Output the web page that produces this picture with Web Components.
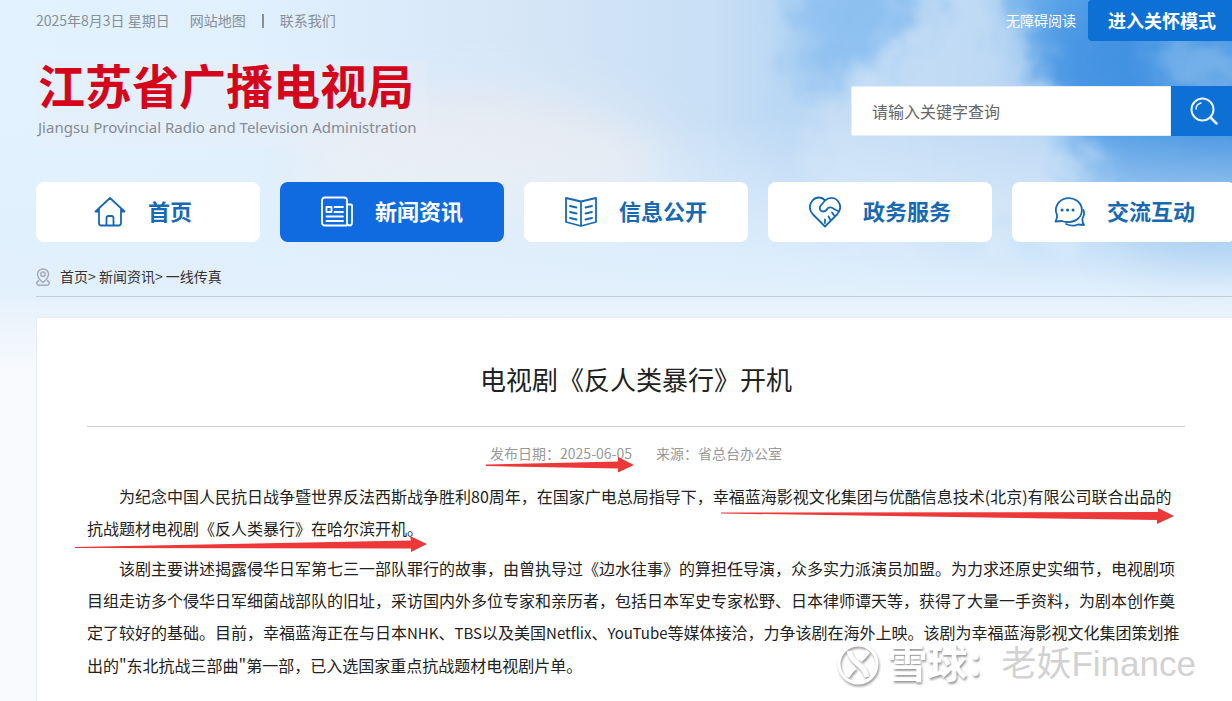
<!DOCTYPE html>
<html lang="zh-CN">
<head>
<meta charset="utf-8">
<meta name="viewport" content="width=device-width, initial-scale=1">
<title>电视剧《反人类暴行》开机</title>
<style>
  html, body { margin: 0; }
  body {
    min-height: 100vh;
    overflow-x: hidden;
    background: #f8fafd;
    color: #222;
    font-family: "Noto Sans CJK SC", "Noto Sans", sans-serif;
    font-size: 14px;
    line-height: 20px;
  }
</style>
</head>
<body>
<gov-page>
  <top-bar slot="top"></top-bar>
  <site-header slot="header"></site-header>
  <main-nav slot="nav">
    <nav-item icon="home">首页</nav-item>
    <nav-item icon="news" active>新闻资讯</nav-item>
    <nav-item icon="book">信息公开</nav-item>
    <nav-item icon="heart">政务服务</nav-item>
    <nav-item icon="chat">交流互动</nav-item>
  </main-nav>
  <bread-crumb slot="crumb"></bread-crumb>
  <news-article>
    <span slot="title">电视剧《反人类暴行》开机</span>
    <span slot="date">发布日期：2025-06-05</span>
    <span slot="source">来源：省总台办公室</span>
    <article-text>为纪念中国人民抗日战争暨世界反法西斯战争胜利80周年，在国家广电总局指导下，幸福蓝海影视文化集团与优酷信息技术(北京)有限公司联合出品的抗战题材电视剧《反人类暴行》在哈尔滨开机。</article-text>
    <article-text>该剧主要讲述揭露侵华日军第七三一部队罪行的故事，由曾执导过《边水往事》的算担任导演，众多实力派演员加盟。为力求还原史实细节，电视剧项目组走访多个侵华日军细菌战部队的旧址，采访国内外多位专家和亲历者，包括日本军史专家松野、日本律师谭天等，获得了大量一手资料，为剧本创作奠定了较好的基础。目前，幸福蓝海正在与日本<span>NHK</span>、<span>TBS</span>以及美国<span>Netflix</span>、<span>YouTube</span>等媒体接洽，力争该剧在海外上映。该剧为幸福蓝海影视文化集团策划推出的"东北抗战三部曲"第一部，已入选国家重点抗战题材电视剧片单。</article-text>
    <red-arrows slot="marks"></red-arrows>
    <water-mark slot="marks"></water-mark>
  </news-article>
</gov-page>

<script>
// small helper: every element here is a shadow root filled from a string
class BaseElement extends HTMLElement {
  constructor() {
    super();
    this.attachShadow({ mode: 'open' });
    this.shadowRoot.innerHTML = this.render();
  }
  render() { return '<slot></slot>'; }
}

// Page frame with the sky behind it
class GovPage extends BaseElement {
  render() {
    return `
      <style>
        :host { display: block; position: relative; overflow: hidden; min-height: 100vh; }
        sky-backdrop { position: absolute; inset: 0 0 auto 0; }
        .shell { position: relative; margin: 0 -4px 0 36px; }
      </style>
      <sky-backdrop></sky-backdrop>
      <div class="shell">
        <slot name="top"></slot>
        <slot name="header"></slot>
        <slot name="nav"></slot>
        <slot name="crumb"></slot>
        <slot></slot>
      </div>
    `;
  }
}

class SkyBackdrop extends BaseElement {
  render() {
    return `
      <style>
        :host { display: block; height: 400px; }
        svg { display: block; width: 100%; height: 100%; }
      </style>
      <svg viewBox="0 0 1232 400" preserveAspectRatio="none" aria-hidden="true">
        <defs>
          <linearGradient id="base" x1="0" y1="0" x2="1" y2="0">
            <stop offset="0" stop-color="#e2f2fe"/>
            <stop offset=".2" stop-color="#e0f0fd"/>
            <stop offset=".42" stop-color="#d6e6f7"/>
            <stop offset=".58" stop-color="#c8dff5"/>
            <stop offset=".72" stop-color="#a6cdf2"/>
            <stop offset=".86" stop-color="#62a8e9"/>
            <stop offset="1" stop-color="#3d8fe0"/>
          </linearGradient>
          <linearGradient id="low" x1="0" y1="0" x2="0" y2="1">
            <stop offset=".3" stop-color="#e1effc" stop-opacity="0"/>
            <stop offset=".55" stop-color="#e0effc" stop-opacity=".7"/>
            <stop offset=".73" stop-color="#e2f0fc"/>
            <stop offset=".8" stop-color="#ebf4fc"/>
            <stop offset=".93" stop-color="#f8fafd"/>
          </linearGradient>
          <filter id="soft" filterUnits="userSpaceOnUse" x="-100" y="-150" width="1500" height="700">
            <feGaussianBlur stdDeviation="28"/>
          </filter>
          <filter id="cloud" filterUnits="userSpaceOnUse" x="-100" y="-150" width="1500" height="700">
            <feTurbulence type="fractalNoise" baseFrequency=".03" numOctaves="5" seed="3" result="noise"/>
            <feGaussianBlur in="SourceGraphic" stdDeviation="16" result="blur"/>
            <feDisplacementMap in="blur" in2="noise" scale="60" xChannelSelector="R" yChannelSelector="G"/>
            <feGaussianBlur stdDeviation="2"/>
          </filter>
        </defs>
        <rect width="1232" height="400" fill="url(#base)"/>
        <ellipse cx="480" cy="170" rx="190" ry="70" fill="#f1eff0" opacity=".75" filter="url(#soft)"/>
        <ellipse cx="1110" cy="60" rx="80" ry="65" fill="#2e84de" opacity=".5" filter="url(#soft)"/>
        <path d="M800-60H930L900 40 840 85 795 95 800 40z" fill="#7ab6ee" opacity=".6" filter="url(#cloud)"/>
        <path d="M940-60 990-60 1030 70 1070 140 1110 240H850L790 140 850 80 910 45z" fill="#cfe2f6" opacity=".8" filter="url(#cloud)"/>
        <path d="M1150 45 1260 35V95H1165z" fill="#9dc8f0" opacity=".6" filter="url(#cloud)"/>
        <path d="M1120 140 1260 130V220H1130z" fill="#3f90df" opacity=".6" filter="url(#cloud)"/>
        <rect width="1232" height="400" fill="url(#low)"/>
        <ellipse cx="1210" cy="235" rx="90" ry="16" fill="#8ebde9" opacity=".7" filter="url(#soft)"/>
      </svg>
    `;
  }
}

class TopBar extends BaseElement {
  render() {
    return `
      <style>
        :host { display: flex; justify-content: space-between; height: 41px; color: #888f96; }
        div { display: flex; align-items: center; }
        a, time { padding-bottom: 2px; color: inherit; text-decoration: none; }
        time { margin-right: 20px; }
        i { width: 2px; height: 14px; margin: 0 16px; background: #888f96; }
        .tools { gap: 12px; color: #fff; }
        button {
          height: 41px;
          padding: 0 20px 2px;
          border: 0;
          border-radius: 4px;
          background: #0d70d5;
          color: #fff;
          font: bold 18px/24px "Noto Sans CJK SC", sans-serif;
        }
      </style>
      <div>
        <time datetime="2025-08-03">2025年8月3日 星期日</time>
        <a href="#map">网站地图</a><i></i><a href="#contact">联系我们</a>
      </div>
      <div class="tools">
        <a href="#access">无障碍阅读</a>
        <button type="button">进入关怀模式</button>
      </div>
    `;
  }
}

class SiteHeader extends BaseElement {
  render() {
    return `
      <style>
        :host { display: flex; justify-content: space-between; align-items: flex-start; height: 141px; }
        .logo { margin-top: 19px; padding: 0 10px 8px 2px; background: rgba(236, 238, 246, .25); text-decoration: none; }
        .logo strong { display: block; color: #d5061b; font-size: 47px; line-height: 48px; font-weight: bold; }
        .logo span { display: block; margin-top: 8px; color: #858b93; font: 15px/22px "Noto Sans", sans-serif; }
        form { display: flex; width: 385px; height: 50px; margin-top: 45px; }
        input {
          flex: 1;
          min-width: 0;
          box-sizing: border-box;
          padding: 0 20px;
          border: 1px solid #e6eef6;
          border-radius: 2px 0 0 2px;
          background: #fff;
          font: 16px/24px "Noto Sans CJK SC", sans-serif;
        }
        input::placeholder { color: #666; opacity: 1; }
        button { width: 65px; padding: 0; border: 0; background: #0d70d5; }
        svg { display: block; margin: 0 auto; }
      </style>
      <a class="logo" href="#home">
        <strong>江苏省广播电视局</strong>
        <span>Jiangsu Provincial Radio and Television Administration</span>
      </a>
      <form role="search">
        <input type="text" aria-label="请输入关键字查询" placeholder="请输入关键字查询">
        <button type="button" aria-label="搜索">
          <svg width="28" height="28" viewBox="0 0 28 28" fill="none" stroke="#e8f5ff" stroke-width="2" stroke-linecap="round">
            <circle cx="12.500" cy="12.500" r="11"/>
            <path d="M20.500 20.500 26.500 26.500" stroke-width="2.500"/>
            <path d="M6 12A6.500 6.500 0 0 1 11 6" stroke-width="1.500"/>
          </svg>
        </button>
      </form>
    `;
  }
}

class MainNav extends BaseElement {
  render() {
    return `
      <style>
        :host { display: block; }
        nav { display: grid; grid-template-columns: repeat(5, 1fr); gap: 20px; }
      </style>
      <nav><slot></slot></nav>
    `;
  }
}

const NAV_ICONS = {
  home: '<path d="M1.500 15.500 16 2l14.500 13.500M5 12.500V27q0 2.500 2.500 2.500h17q2.500 0 2.500-2.500V12.500M12.500 29.500V22q0-2 2-2h3q2 0 2 2v7.500M1.500 15.500H5M27 15.500h3.500"/>',
  news: '<path d="M25.500 29.500H4Q1 29.500 1 26.500V4.500Q1 1.500 4 1.500h19Q26 1.500 26 4.500v22q0 3 2.500 3t2.500-3V9.500q0-1-1-1h-4"/><path d="M5.500 11h5v5h-5zM13.500 11H22M13.500 16H22M5.500 20.500H22M5.500 25H22"/>',
  book: '<path d="M16 5.500 1 2v24l15 4 15-4V2zM16 5.500V30M5 10l6.500 1.500M5 16l6.500 1.500M5 22l6.500 1.500M20.500 11.500 27 10M20.500 17.500 27 16M20.500 23.500 27 22"/>',
  heart: '<path d="M16 4.500C13 .500 7 .500 3.500 4.500-1 10 .500 14.500 4 18.500L16 30.500 28 18.500C31.500 14.500 33 10 28.500 4.500 25.500 1 20 1 16 4.500L11 10.500Q10 15 14 15.500 17 15.500 19 12q3-1.500 6 1l5 2.500"/><path d="M16 23.500v3.500M19.500 20.500 21.500 24M23 16.500 25.500 20"/>',
  chat: '<path d="M4 19A13 12 0 1 1 14 26Q11 26 9 25L2.500 25.500Q4.500 22.500 4 19z"/><path d="M30.500 14q1.500 5-1 8.500-.500 3.500 1.500 6.500l-6-.500q-5 2.500-12-.500"/><path d="M9 14h.1M14.500 14h.1M20 14h.1" stroke-width="3"/>'
};

class NavItem extends BaseElement {
  render() {
    return `
      <style>
        :host { display: block; --ink: #1669b2; --fill: #fff; }
        :host([active]) { --ink: #fff; --fill: #106be0; }
        a {
          display: flex;
          align-items: center;
          justify-content: center;
          gap: 22px;
          height: 60px;
          border-radius: 8px;
          background: var(--fill);
          color: var(--ink);
          font-size: 22px;
          font-weight: bold;
          line-height: 30px;
          text-decoration: none;
        }
        span { min-width: 54px; padding-bottom: 4px; }
        svg { flex: none; fill: none; stroke: var(--ink); stroke-width: 1.8; stroke-linecap: round; stroke-linejoin: round; }
      </style>
      <a href="#"><svg width="32" height="32" viewBox="0 0 32 32" aria-hidden="true"></svg><span><slot></slot></span></a>
    `;
  }
  connectedCallback() {
    this.shadowRoot.querySelector('svg').innerHTML = NAV_ICONS[this.getAttribute('icon')] || '';
  }
}

class BreadCrumb extends BaseElement {
  render() {
    return `
      <style>
        :host { display: block; padding-top: 25px; margin-bottom: 20px; border-bottom: 1px solid #c0ccda; }
        nav { display: flex; align-items: center; gap: 10px; height: 20px; padding-bottom: 9px; color: #333; }
        span { padding-bottom: 2px; }
        a { color: inherit; text-decoration: none; }
      </style>
      <nav aria-label="当前位置">
        <svg width="14" height="18" viewBox="0 0 14 18" fill="none" stroke="#a5abb7" stroke-width="1.500" aria-hidden="true">
          <path d="M7 14.500Q1.500 10 1.500 6.200a5.500 5.300 0 0 1 11 0Q12.500 10 7 14.500z"/>
          <circle cx="7" cy="6.200" r="2.200"/>
          <path d="M3 12.500Q0 14 1 16q.500 1.200 2 1.200h8q1.500 0 2-1.200 1-2-2-3.500"/>
        </svg>
        <span><a href="#home">首页</a>&gt; <a href="#news">新闻资讯</a>&gt; <a href="#line">一线传真</a></span>
      </nav>
    `;
  }
}

class NewsArticle extends BaseElement {
  render() {
    return `
      <style>
        :host { display: block; position: relative; padding: 42px 50px 24px; border: 1px solid #e9edf1; background: #fff; }
        h1 { margin: 0; padding-bottom: 28px; border-bottom: 1px solid #ccc; font-size: 26px; line-height: 38px; font-weight: normal; text-align: center; }
        .meta { display: flex; justify-content: center; gap: 24px; padding: 16px 0 9px; color: #999; }
      </style>
      <h1><slot name="title"></slot></h1>
      <div class="meta"><slot name="date"></slot><slot name="source"></slot></div>
      <slot></slot>
      <slot name="marks"></slot>
    `;
  }
}

class ArticleText extends BaseElement {
  render() {
    return `
      <style>
        :host { display: block; margin-top: 8px; font-size: 16px; line-height: 32px; }
        p { margin: 0; text-indent: 2em; }
        ::slotted(span) { font-size: 15px; }
      </style>
      <p><slot></slot></p>
    `;
  }
}

// Hand-drawn style markers laid over the text
class RedArrows extends BaseElement {
  render() {
    return `
      <style>
        :host { display: block; position: absolute; top: 0; left: 0; pointer-events: none; }
        svg { display: block; fill: #ec3838; }
      </style>
      <svg width="1200" height="260" viewBox="37 318 1200 260" aria-hidden="true">
        <path d="M486 464.500 618 461.500 618 457 634 465 618 472.500 618 468.500 486 466z"/>
        <path d="M721 512.500 1158 512 1158 508 1174 516 1157 524 1157 520 721 513.500z"/>
        <path d="M75 547 411 540.500 410 536 427 544 411 552 411 548.500 75 548z"/>
      </svg>
    `;
  }
}

class WaterMark extends BaseElement {
  render() {
    return `
      <style>
        :host {
          display: flex;
          align-items: center;
          position: absolute;
          right: 39px;
          top: 326px;
          height: 40px;
          white-space: nowrap;
          pointer-events: none;
          color: #fff;
          font: 35px/40px "Liberation Sans", "Noto Sans CJK SC", sans-serif;
        }
        svg, b, i { filter: drop-shadow(1px 2px 1px rgba(0, 0, 0, .4)); }
        b { margin-left: 8px; font-size: 40px; }
        i { width: 34px; font-size: 32px; font-style: normal; font-weight: bold; }
        span { color: #d2d2d2; text-shadow: -1px -1px 0 #fff; }
      </style>
      <svg width="42" height="42" viewBox="0 0 42 42" fill="none" stroke="#fff" aria-hidden="true">
        <circle cx="21" cy="21" r="19" stroke-width="3"/>
        <path d="M12 8q2 8 9 13t9 13M31 8q-4 6-8 9M18 24q-5 4-8 10" stroke-width="5"/>
      </svg>
      <b>雪球</b><i>：</i><span>老妖Finance</span>
    `;
  }
}

customElements.define('sky-backdrop', SkyBackdrop);
customElements.define('gov-page', GovPage);
customElements.define('top-bar', TopBar);
customElements.define('site-header', SiteHeader);
customElements.define('main-nav', MainNav);
customElements.define('nav-item', NavItem);
customElements.define('bread-crumb', BreadCrumb);
customElements.define('news-article', NewsArticle);
customElements.define('article-text', ArticleText);
customElements.define('red-arrows', RedArrows);
customElements.define('water-mark', WaterMark);
</script>
</body>
</html>
